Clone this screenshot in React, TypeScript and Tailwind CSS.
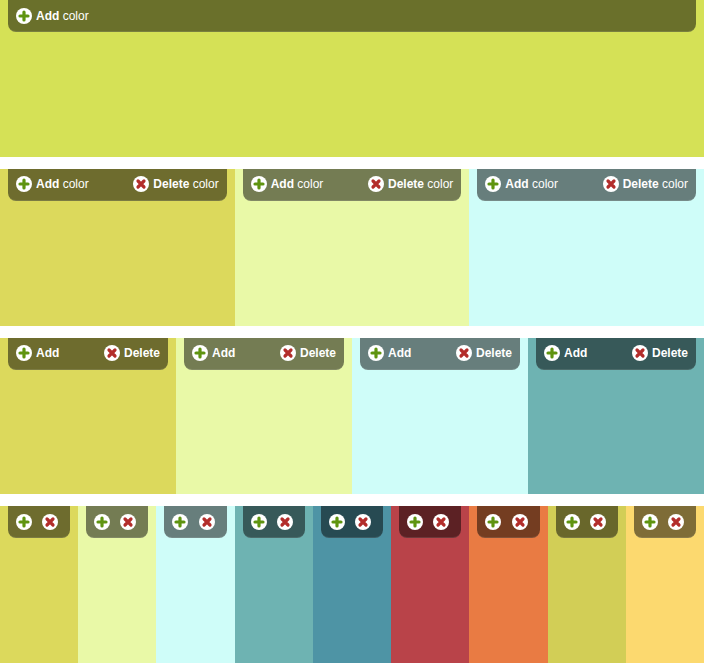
const rows = [
  { labels: "full", colors: ["#d5e156"] },
  { labels: "full", colors: ["#dcd95c", "#e9f9a7", "#cffdf9"] },
  { labels: "short", colors: ["#dcd95c", "#e9f9a7", "#cffdf9", "#6eb3b2"] },
  {
    labels: "none",
    colors: ["#dcd95c", "#e9f9a7", "#cffdf9", "#6eb3b2", "#4e94a5", "#b94349", "#e97b43", "#d2ce56", "#fcd96f"],
  },
]

function AddIcon() {
  return (
    <svg className="w-4 h-4 flex-shrink-0" viewBox="0 0 16 16">
      <circle cx="8" cy="8" r="8" fill="#fff" />
      <path d="M8 4v8M4 8h8" stroke="#5f9410" strokeWidth={3.2} strokeLinecap="round" />
    </svg>
  )
}

function DeleteIcon() {
  return (
    <svg className="w-4 h-4 flex-shrink-0" viewBox="0 0 16 16">
      <circle cx="8" cy="8" r="8" fill="#fff" />
      <path d="M5 5l6 6M11 5l-6 6" stroke="#b32d2b" strokeWidth={3.2} strokeLinecap="round" />
    </svg>
  )
}

function Button({ kind, labels }: { kind: "add" | "delete"; labels: string }) {
  const word = kind === "add" ? "Add" : "Delete"
  return (
    <div className="flex items-center gap-1">
      {kind === "add" ? <AddIcon /> : <DeleteIcon />}
      {labels !== "none" && (
        <span className="text-xs leading-4 text-white whitespace-nowrap">
          <b className="font-bold">{word}</b>
          {labels === "full" && " color"}
        </span>
      )}
    </div>
  )
}

function Swatch({ color, labels, only }: { color: string; labels: string; only: boolean }) {
  return (
    <div className="flex-1 min-w-0" style={{ backgroundColor: color }}>
      <div
        className={`mx-2 h-8 rounded-b-lg bg-black/50 border-b border-white/10 flex items-center justify-between pl-2 ${
          labels === "none" ? "pr-3" : "pr-2"
        }`}
      >
        <Button kind="add" labels={labels} />
        {!only && <Button kind="delete" labels={labels} />}
      </div>
    </div>
  )
}

export default function App() {
  return (
    <div className="h-[663px] flex flex-col gap-3 bg-white font-['Liberation_Sans',Arial,sans-serif]">
      {rows.map((row, i) => (
        <div key={i} className="flex-1 flex min-h-0">
          {row.colors.map((color, j) => (
            <Swatch key={j} color={color} labels={row.labels} only={row.colors.length === 1} />
          ))}
        </div>
      ))}
    </div>
  )
}
